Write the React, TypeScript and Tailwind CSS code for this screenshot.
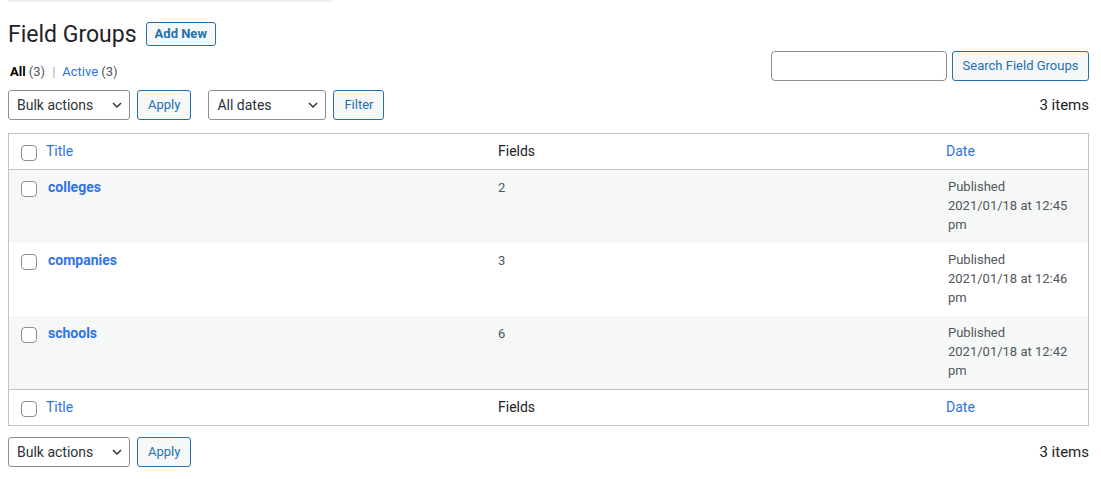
import React from "react";

type Group = { title: string; fields: number; time: string };

const groups: Group[] = [
  { title: "colleges", fields: 2, time: "12:45" },
  { title: "companies", fields: 3, time: "12:46" },
  { title: "schools", fields: 6, time: "12:42" },
];

const Chevron = () => (
  <svg width="16" height="16" viewBox="0 0 20 20" className="text-[#2c3338]">
    <path d="M5 7.5l5 5 5-5" fill="none" stroke="currentColor" strokeWidth="1.8" />
  </svg>
);

const Select = ({ label, width, className = "" }: { label: string; width: string; className?: string }) => (
  <div
    className={`${width} h-[30px] flex items-center justify-between pl-[8px] pr-[4px] border border-[#8c8f94] rounded-[3px] bg-white text-[14px] text-[#2c3338] ${className}`}
  >
    <span>{label}</span>
    <Chevron />
  </div>
);

const SecondaryButton = ({ label, className = "" }: { label: string; className?: string }) => (
  <button
    type="button"
    className={`h-[30px] px-[10px] border border-[#2271b1] rounded-[3px] bg-[#f6f7f7] text-[13px] text-[#2271b1] ${className}`}
  >
    {label}
  </button>
);

const Checkbox = () => (
  <span className="block w-[16px] h-[16px] border border-[#8c8f94] rounded-[4px] bg-white" />
);

const FieldGroups: React.FC = () => {
  const linkColor = "text-[#2f73e8]";

  const headRow = (
    <div className="flex h-[35px] items-center bg-white text-[14px]">
      <div className="w-[29px] pl-[12px] pt-[2px] shrink-0">
        <Checkbox />
      </div>
      <div className={`w-[452px] pl-[8px] ${linkColor}`}>Title</div>
      <div className="w-[448px] text-[#1d2327] pl-[8px]">Fields</div>
      <div className={`flex-1 ${linkColor} pl-[8px]`}>Date</div>
    </div>
  );

  return (
    <div
      className="w-[1101px] h-[479px] bg-white pl-[8px] pr-[12px] overflow-hidden"
      style={{ fontFamily: "Roboto, 'Liberation Sans', sans-serif" }}
    >
      <div className="w-[325px] h-[2px] bg-[#f2f2f2]" />

      <div className="flex items-center mt-[20px] h-[24px]">
        <h1 className="text-[23px] leading-none text-[#1d2327]">Field Groups</h1>
        <button
          type="button"
          className="ml-[9px] h-[24px] px-[8px] border border-[#2271b1] rounded-[3px] bg-[#f6f7f7] text-[13px] font-bold text-[#2271b1]"
        >
          Add New
        </button>
      </div>

      <div className="flex items-start justify-between mt-[5px] h-[30px]">
        <div className="text-[13px] leading-[20px] mt-[11px] pl-[2px] text-[#50575e]">
          <span className="font-bold text-[#000]">All</span> (3)
          <span className="mx-[7px] text-[#a7aaad]">|</span>
          <span className={linkColor}>Active</span> (3)
        </div>
        <div className="flex gap-[5px]">
          <div className="w-[176px] h-[30px] border border-[#8c8f94] rounded-[4px] bg-white" />
          <SecondaryButton label="Search Field Groups" className="w-[137px] !px-0" />
        </div>
      </div>

      <div className="flex items-center mt-[9px]">
        <Select label="Bulk actions" width="w-[122px]" />
        <SecondaryButton label="Apply" className="ml-[7px]" />
        <Select label="All dates" width="w-[118px]" className="ml-[17px]" />
        <SecondaryButton label="Filter" className="ml-[7px]" />
        <div className="ml-auto text-[15px] text-[#1d2327]">3 items</div>
      </div>

      <div className="mt-[13px] border border-[#c3c4c7]">
        <div className="border-b border-[#c3c4c7]">{headRow}</div>
        {groups.map((g, i) => (
          <div
            key={g.title}
            className={`flex h-[73px] text-[13px] ${i % 2 === 0 ? "bg-[#f6f7f7]" : "bg-white"}`}
          >
            <div className="w-[29px] pl-[12px] pt-[11px] shrink-0">
              <Checkbox />
            </div>
            <div className={`w-[452px] pl-[10px] pt-[7px] text-[14px] font-bold ${linkColor}`}>
              {g.title}
            </div>
            <div className="w-[448px] pl-[8px] pt-[8px] text-[#50575e]">{g.fields}</div>
            <div className="flex-1 pl-[10px] pt-[7px] text-[#50575e] leading-[19px]">
              Published
              <br />
              2021/01/18 at {g.time}
              <br />
              pm
            </div>
          </div>
        ))}
        <div className="border-t border-[#c3c4c7]">{headRow}</div>
      </div>

      <div className="flex items-center mt-[11px]">
        <Select label="Bulk actions" width="w-[122px]" />
        <SecondaryButton label="Apply" className="ml-[7px]" />
        <div className="ml-auto text-[15px] text-[#1d2327]">3 items</div>
      </div>
    </div>
  );
};

export default FieldGroups;
